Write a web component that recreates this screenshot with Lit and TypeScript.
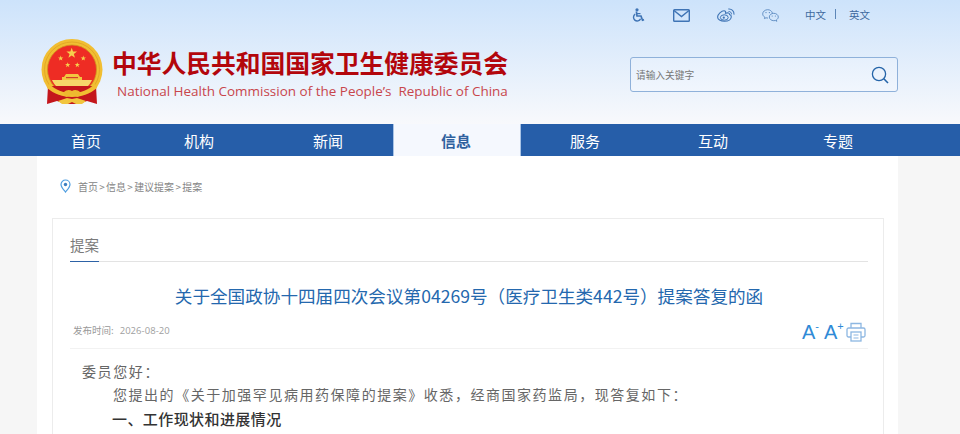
import { LitElement, html, css, svg } from "lit";
import { customElement } from "lit/decorators.js";

const star = (cx: number, cy: number, r: number) => {
  const pts: string[] = [];
  for (let i = 0; i < 10; i++) {
    const a = -Math.PI / 2 + (i * Math.PI) / 5;
    const rr = i % 2 ? r * 0.4 : r;
    pts.push(`${(cx + rr * Math.cos(a)).toFixed(2)},${(cy + rr * Math.sin(a)).toFixed(2)}`);
  }
  return svg`<polygon points=${pts.join(" ")} fill="#f6cf4c" />`;
};

const navItems = [
  { t: "首页", c: "w1" },
  { t: "机构", c: "w2" },
  { t: "新闻", c: "w3" },
  { t: "信息", c: "w4 active" },
  { t: "服务", c: "w4" },
  { t: "互动", c: "w4" },
  { t: "专题", c: "w5" },
];

const crumbs = ["首页", "信息", "建议提案", "提案"];

@customElement("app-root")
export class AppRoot extends LitElement {
  static styles = css`
    :host {
      display: block;
      width: 960px;
      height: 434px;
      overflow: hidden;
      background: #f6f6f6;
      font-family: "Noto Sans CJK SC", "Liberation Sans", sans-serif;
    }
    .header {
      height: 124px;
      box-sizing: border-box;
      background: linear-gradient(#cde3fb, #f8f9fc);
      display: flex;
      flex-direction: column;
    }
    .top {
      height: 30px;
      display: flex;
      align-items: center;
      padding-left: 631px;
      color: #3f74b5;
      font-size: 10.5px;
    }
    .top svg { display: block; flex: none; }
    .i1 { margin-right: 28px; }
    .i2 { margin-right: 27px; }
    .i3 { margin-right: 27px; }
    .i4 { margin-right: 26px; }
    .lang { display: flex; align-items: center; color: #40699e; padding-bottom: 2px; }
    .sep { width: 1px; height: 10px; background: #5d86b8; margin: 0 13px 0 9px; }
    .brand {
      display: flex;
      align-items: flex-start;
      padding: 9px 0 0 41px;
    }
    .emblem { flex: none; width: 62px; height: 66px; margin-right: 9px; }
    .names { width: 397px; padding-top: 8px; }
    .cn {
      font-size: 24.8px;
      line-height: 30px;
      font-weight: 700;
      color: #b3060c;
      letter-spacing: -0.05px;
      white-space: nowrap;
    }
    .en {
      font-family: "Open Sans", sans-serif;
      font-size: 13.47px;
      line-height: 20px;
      color: #c8464c;
      margin: 4px 0 0 5px;
      white-space: pre;
    }
    .search {
      box-sizing: border-box;
      width: 268px;
      height: 35px;
      margin: 18px 0 0 121px;
      border: 1px solid #8fb1da;
      border-radius: 3px;
      background: linear-gradient(#e6f0fc, #f1f6fd);
      display: flex;
      align-items: center;
      justify-content: space-between;
      padding: 0 8px 0 5px;
      font-size: 9.7px;
      color: #777;
    }
    .nav {
      height: 32px;
      background: #265ea9;
      display: flex;
      padding-left: 22px;
      color: #fff;
      font-size: 15px;
    }
    .nav div { display: flex; align-items: center; justify-content: center; }
    .w1 { width: 128px; }
    .w2 { width: 98px; margin-right: 15px; }
    .w3 { width: 130px; }
    .w4 { width: 128px; }
    .w5 { width: 122px; }
    .nav .active {
      background: #f5f8fe;
      color: #2f619f;
      font-weight: 700;
      box-sizing: border-box;
      border-left: 1px solid #a9c4e6;
      border-right: 1px solid #a9c4e6;
      padding-right: 2px;
    }
    .page {
      width: 861px;
      height: 278px;
      margin-left: 37px;
      background: #fff;
      padding: 0 14px 0 15px;
      box-sizing: border-box;
    }
    .crumb {
      height: 62px;
      box-sizing: border-box;
      display: flex;
      align-items: center;
      padding: 0 0 2px 8px;
      font-size: 10px;
      color: #858585;
    }
    .crumb svg { margin-right: 7px; }
    .gt { padding: 0 1.25px; }
    .card {
      border: 1px solid #ececec;
      height: 240px;
      padding: 0 15px 0 17px;
    }
    .tab {
      height: 43px;
      border-bottom: 1px solid #e3e3e3;
      box-sizing: border-box;
      display: flex;
      align-items: flex-end;
    }
    .tab span {
      font-size: 14.5px;
      line-height: 20px;
      padding-bottom: 6px;
      color: #7a7a7a;
      border-bottom: 1px solid #2d62a6;
      margin-bottom: -1px;
    }
    h1 {
      margin: 0;
      height: 24px;
      padding-top: 22px;
      font-size: 17.6px;
      line-height: 24px;
      font-weight: 400;
      color: #2468ae;
      text-align: center;
      white-space: nowrap;
    }
    .meta {
      height: 38px;
      margin-top: 3px;
      box-sizing: border-box;
      border-bottom: 1px solid #f2f2f2;
      display: flex;
      align-items: center;
      justify-content: space-between;
      padding: 0 2px 0 3px;
      font-size: 9.5px;
      color: #999;
    }
    .date { font-family: "Open Sans", sans-serif; letter-spacing: 0.05px; margin-left: 6px; color: #a0a0a0; }
    .tools {
      display: flex;
      align-items: flex-end;
      padding-top: 4px;
      color: #2f8ad6;
      font-family: "Liberation Sans", sans-serif;
    }
    .fa { font-size: 20px; line-height: 20px; display: flex; width: 22px; }
    .fa sup { font-size: 11px; line-height: 10px; margin-top: -1px; }
    .body {
      font-size: 14px;
      color: #666;
      letter-spacing: 1.6px;
      white-space: nowrap;
    }
    .body p { margin: 0; }
    .p0 { padding: 10px 0 0 12px; line-height: 24px; }
    .p1 { padding-left: 43px; letter-spacing: 1.54px; line-height: 22px; }
    .body .h {
      padding-left: 42px;
      line-height: 28px;
      font-size: 15px;
      font-weight: 500;
      color: #333;
      letter-spacing: 0.42px;
    }
  `;

  render() {
    return html`
      <div class="header">
        <div class="top">
          <svg class="i1" width="14" height="14" viewBox="0 0 14 14" fill="none" stroke="#3f74b5">
            <circle cx="6" cy="1.8" r="1.6" fill="#3f74b5" stroke="none" />
            <path d="M5.4 3.5 L6 8 L10 8 L11.5 12.2 L13 11.6" stroke-width="1.7" />
            <path d="M6 5.6 L9.5 5.6" stroke-width="1.2" />
            <path d="M4.2 6.2 A3.7 3.7 0 1 0 9.6 10.8" stroke-width="1.4" />
          </svg>
          <svg class="i2" width="17" height="13" viewBox="0 0 17 13" fill="none" stroke="#3f74b5" stroke-width="1.4">
            <rect x="0.7" y="0.7" width="15.6" height="11.6" rx="0.8" />
            <path d="M1 1.5 L8.5 7.6 L16 1.5" />
          </svg>
          <svg class="i3" width="18" height="14" viewBox="0 0 18 14" fill="none" stroke="#3f74b5">
            <path d="M7.5 13.3 C3.5 13.3 0.6 11.5 0.6 9 C0.6 6.4 4.6 2.8 7 2.8 C8.6 2.8 8.9 4.1 8.5 5.3 C10.8 4.5 12.6 4.8 12.6 6.5 C13.8 6.9 14.5 7.7 14.3 9 C13.9 11.5 11 13.3 7.5 13.3 Z" stroke-width="1.1" />
            <ellipse cx="7.3" cy="9.5" rx="3.9" ry="2.7" stroke-width="1" />
            <circle cx="6.8" cy="9.7" r="1.1" fill="#3f74b5" stroke="none" />
            <path d="M11.5 3.6 A2.4 2.4 0 0 1 14.4 6.4" stroke-width="1" />
            <path d="M11.3 1 A5 5 0 0 1 17 6.6" stroke-width="1.1" />
          </svg>
          <svg class="i4" width="17" height="13" viewBox="0 0 17 13" fill="none" stroke="#5a89c0" stroke-width="0.9">
            <path d="M10.4 4 C9.9 2.1 8 0.7 5.7 0.7 C3 0.7 0.7 2.6 0.7 4.9 C0.7 6.3 1.5 7.4 2.8 8.2 L2.4 9.6 L4 8.8 C4.7 9 5.3 9.1 6 9.1" />
            <path d="M16.3 8 C16.3 6 14.3 4.3 11.8 4.3 C9.3 4.3 7.3 6 7.3 8 C7.3 10 9.3 11.7 11.8 11.7 C12.3 11.7 12.8 11.6 13.3 11.5 L14.8 12.3 L14.4 10.9 C15.5 10.2 16.3 9.2 16.3 8 Z" />
            <circle cx="4" cy="3.6" r="0.7" fill="#5a89c0" stroke="none" />
            <circle cx="7.4" cy="3.6" r="0.7" fill="#5a89c0" stroke="none" />
            <circle cx="10.2" cy="7" r="0.6" fill="#5a89c0" stroke="none" />
            <circle cx="13.4" cy="7" r="0.6" fill="#5a89c0" stroke="none" />
          </svg>
          <div class="lang"><span>中文</span><i class="sep"></i><span>英文</span></div>
        </div>
        <div class="brand">
          <svg class="emblem" viewBox="0 0 62 66">
            <circle cx="31" cy="30.5" r="30.5" fill="#f1be32" />
            <circle cx="31" cy="30.5" r="27.5" fill="none" stroke="#e3a826" stroke-width="1" />
            <circle cx="31" cy="30.5" r="24.5" fill="#ee2c24" stroke="#cf951f" stroke-width="0.8" />
            ${star(30.7, 14.3, 5.6)} ${star(19.7, 19.3, 2.8)} ${star(42.3, 19.3, 2.8)} ${star(26.7, 26, 2.8)} ${star(36.3, 26, 2.8)}
            <path d="M23 38 L25 35 H37 L39 38 H41 V41 H21 V38 Z" fill="#f2c640" />
            <rect x="25" y="38" width="12" height="1.2" fill="#d5402a" />
            <path d="M11 41 H51 C50 43 49 45 47 47 H15 C13 45 12 43 11 41 Z" fill="#f6d76a" />
            <path d="M7 47 L6 65 L16 62 L24 65 H38 L46 62 L56 65 L55 47 Z" fill="#c4161c" />
            <path d="M8 45 C15 51 22 54 31 54 C40 54 47 51 54 45 L56 49 C49 55 40 58 31 58 C22 58 13 55 6 49 Z" fill="#f1be32" />
            <path d="M22 54 C26 50 29 51 31 52 C33 51 36 50 40 54 L37 58 L31 56 L25 58 Z" fill="#eeb92f" />
            <path d="M17 62 L26 59 L31 60 L36 59 L45 62 L41 65 H35 L31 63 L27 65 H21 Z" fill="#f1c53e" />
          </svg>
          <div class="names">
            <div class="cn">中华人民共和国国家卫生健康委员会</div>
            <div class="en">National Health Commission of the People’s  Republic of China</div>
          </div>
          <div class="search">
            <span>请输入关键字</span>
            <svg width="18" height="18" viewBox="0 0 18 18" fill="none" stroke="#2464a8" stroke-width="1.3">
              <circle cx="8" cy="8" r="6.6" />
              <path d="M12.8 12.8 L17 17" stroke-width="1.6" />
            </svg>
          </div>
        </div>
      </div>
      <div class="nav">${navItems.map((n) => html`<div class=${n.c}>${n.t}</div>`)}</div>
      <div class="page">
        <div class="crumb">
          <svg width="11" height="14" viewBox="0 0 11 14" fill="none">
            <path d="M5.5 13 C3 10 1 8 1 5.5 A4.5 4.5 0 0 1 10 5.5 C10 8 8 10 5.5 13 Z" stroke="#4d9de0" stroke-width="1.2" />
            <circle cx="5.5" cy="5.5" r="1.7" fill="#3d7fc0" />
          </svg>
          <span>${crumbs.map((c, i) => html`${i ? html`<span class="gt">&gt;</span>` : ""}${c}`)}</span>
        </div>
        <div class="card">
          <div class="tab"><span>提案</span></div>
          <h1>关于全国政协十四届四次会议第04269号（医疗卫生类442号）提案答复的函</h1>
          <div class="meta">
            <div>发布时间:<span class="date">2026-08-20</span></div>
            <div class="tools">
              <span class="fa">A<sup>-</sup></span>
              <span class="fa">A<sup>+</sup></span>
              <svg width="20" height="20" viewBox="0 0 20 20" fill="none" stroke="#8db7e2" stroke-width="1.3">
                <path d="M5 6 V1.5 H15 V6" />
                <path d="M5 15 H2.5 A1.5 1.5 0 0 1 1 13.5 V7.5 A1.5 1.5 0 0 1 2.5 6 H17.5 A1.5 1.5 0 0 1 19 7.5 V13.5 A1.5 1.5 0 0 1 17.5 15 H15" />
                <rect x="5" y="10" width="10" height="9" />
                <path d="M7.5 13 H12.5 M7.5 16 H12.5" stroke-width="1" />
              </svg>
            </div>
          </div>
          <div class="body">
            <p class="p0">委员您好：</p>
            <p class="p1">您提出的《关于加强罕见病用药保障的提案》收悉，经商国家药监局，现答复如下：</p>
            <p class="h">一、工作现状和进展情况</p>
          </div>
        </div>
      </div>
    `;
  }
}
